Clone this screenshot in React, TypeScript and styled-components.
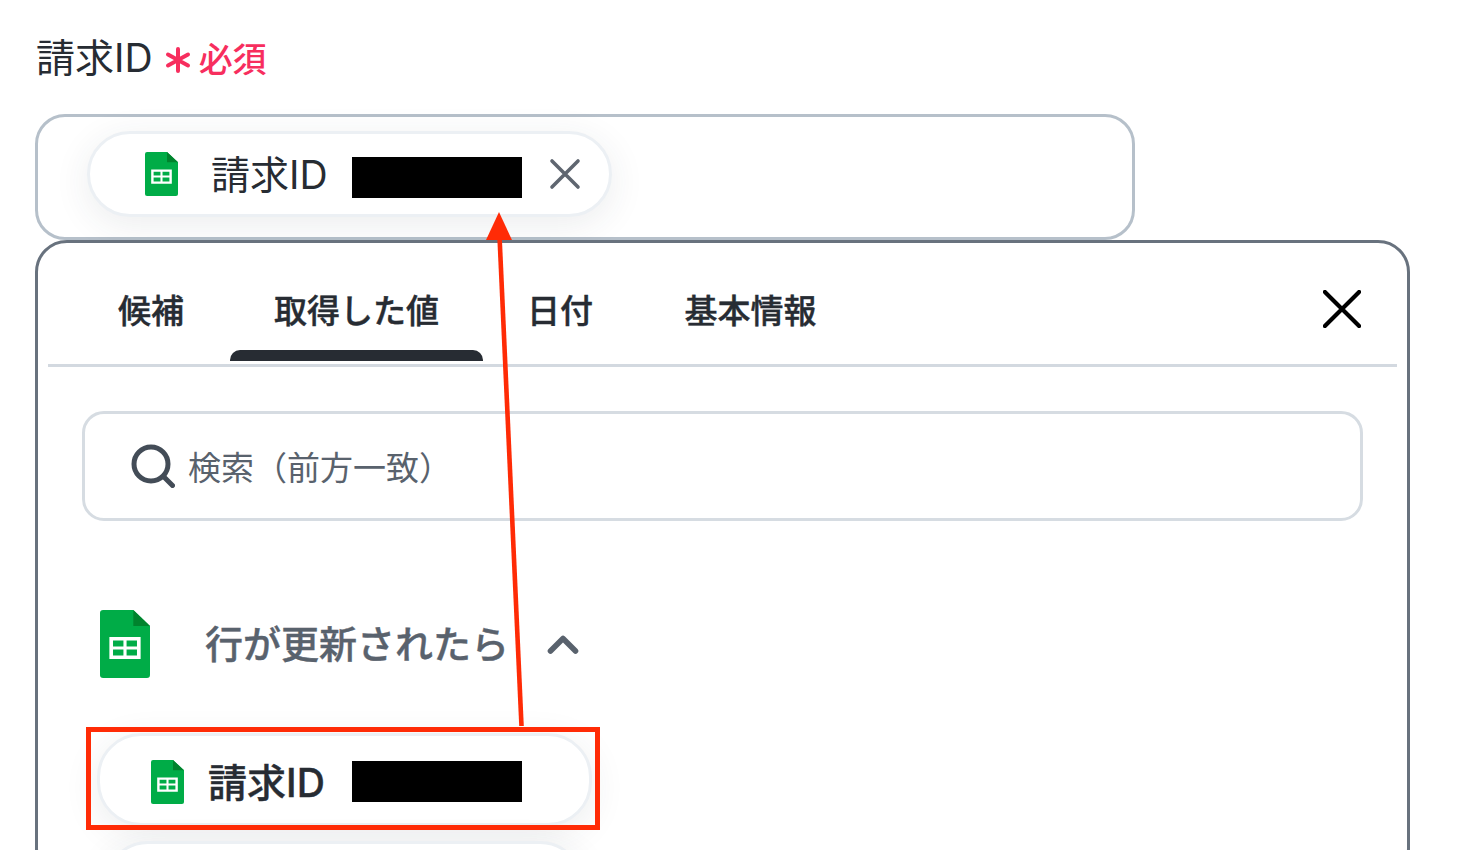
import React from "react";
import styled, { createGlobalStyle } from "styled-components";

const Global = createGlobalStyle`
  html, body { margin: 0; padding: 0; background: #fff; overflow: hidden; }
  body { font-family: Inter, "Noto Sans CJK JP", "Noto Sans", sans-serif; color: #272c33; }
`;
const Page = styled.div`
  position: relative;
  width: 1462px;
  height: 850px;
  overflow: hidden;
  padding: 36px 0 0 35px;
  box-sizing: border-box;
`;
const LabelRow = styled.div`
  display: flex;
  align-items: center;
  height: 44px;
  padding-left: 1px;
`;
const LabelText = styled.span`
  font-size: 39px;
  line-height: 44px;
  color: #272c33;
`;
const Required = styled.span`
  margin: 4px 0 0 12px;
  font-size: 34px;
  font-weight: 500;
  line-height: 44px;
  color: #f72e5e;
  display: flex;
  align-items: center;
  gap: 8px;
`;
const FieldBox = styled.div`
  margin-top: 34px;
  width: 1100px;
  height: 126px;
  box-sizing: border-box;
  border: 3px solid #b6c0ca;
  border-radius: 30px;
  padding: 14px 0 0 49px;
`;
const Chip = styled.div<{ $w: number; $h: number; $pad: number; $low?: boolean }>`
  width: ${(p) => p.$w}px;
  height: ${(p) => p.$h}px;
  box-sizing: border-box;
  border: 3px solid #ecf0f4;
  border-radius: 44px;
  background: #fff;
  box-shadow: 0 8px 36px rgba(40, 50, 70, 0.09);
  display: flex;
  align-items: center;
  padding-left: ${(p) => p.$pad}px;
  padding-top: ${(p) => (p.$low ? 4 : 0)}px;
`;
const ChipText = styled.span<{ $bold?: boolean; $size: number; $left: number }>`
  font-size: ${(p) => p.$size}px;
  font-weight: ${(p) => (p.$bold ? 500 : 400)};
  ${(p) => (p.$bold ? "-webkit-text-stroke: 0.4px #272c33;" : "")}
  margin-left: ${(p) => p.$left}px;
  padding-bottom: 4px;
  width: ${(p) => (p.$bold ? 144 : 141)}px;
  flex: none;
  color: #272c33;
  white-space: nowrap;
`;
const Redact = styled.div<{ $flat?: boolean }>`
  width: 170px;
  height: 41px;
  background: #000;
  flex: none;
  margin-top: ${(p) => (p.$flat ? 0 : 6)}px;
`;
const ChipClose = styled.svg`
  margin-left: 27px;
  flex: none;
`;
const Panel = styled.div`
  width: 1375px;
  height: 640px;
  box-sizing: border-box;
  border: 3px solid #68727e;
  border-radius: 32px;
  background: #fff;
  padding: 0 10px;
`;
const TabBar = styled.div`
  position: relative;
  display: flex;
  align-items: flex-start;
  height: 124px;
  box-sizing: border-box;
  padding-left: 24px;
  border-bottom: 3px solid #d3d9e0;
`;
const Tab = styled.div<{ $w: number; $active?: boolean }>`
  position: relative;
  width: ${(p) => p.$w}px;
  height: 119px;
  flex: none;
  font-size: 33px;
  font-weight: 500;
  -webkit-text-stroke: 0.4px #272c33;
  line-height: 136px;
  text-align: center;
  color: #272c33;
  ${(p) =>
    p.$active &&
    `&::after { content: ""; position: absolute; left: 0; right: 0; top: 107px; height: 11px; background: #272c33; border-radius: 10px 10px 0 0; }`}
`;
const PanelClose = styled.svg`
  position: absolute;
  right: 36px;
  top: 47px;
`;
const SearchBox = styled.div`
  margin: 44px 0 0 34px;
  width: 1281px;
  height: 110px;
  box-sizing: border-box;
  border: 3px solid #d6dce2;
  border-radius: 22px;
  display: flex;
  align-items: center;
  padding-left: 46px;
  gap: 13px;
`;
const Placeholder = styled.span`
  font-size: 33px;
  color: #59626d;
`;
const GroupRow = styled.div`
  display: flex;
  align-items: center;
  margin: 87px 0 0 52px;
  height: 72px;
`;
const GroupTitle = styled.span`
  margin-left: 55px;
  padding-bottom: 6px;
  width: 337px;
  flex: none;
  font-size: 38px;
  font-weight: 500;
  -webkit-text-stroke: 0.4px #59626d;
  color: #59626d;
  white-space: nowrap;
`;
const Items = styled.div`
  margin: 53px 0 0 49px;
  display: flex;
  flex-direction: column;
  gap: 15px;
`;
const NextChip = styled.div`
  margin-left: 7px;
  width: 480px;
  height: 90px;
  box-sizing: border-box;
  border: 3px solid #ecf0f4;
  border-radius: 44px;
  background: #fff;
  box-shadow: 0 8px 36px rgba(40, 50, 70, 0.09);
`;
const RedBox = styled.div`
  position: absolute;
  left: 86px;
  top: 727px;
  width: 514px;
  height: 103px;
  box-sizing: border-box;
  border: 5px solid #ff2b06;
`;
const Arrow = styled.svg`
  position: absolute;
  left: 0;
  top: 0;
  pointer-events: none;
`;

const SheetIcon = ({ w, h }: { w: number; h: number }) => (
  <svg width={w} height={h} viewBox="0 0 48 68" preserveAspectRatio="none" style={{ flex: "none", display: "block" }}>
    <path d="M3 0H32L48 16V65a3 3 0 0 1-3 3H3a3 3 0 0 1-3-3V3a3 3 0 0 1 3-3Z" fill="#00ac47" />
    <path d="M32 0L48 16H32Z" fill="#00832d" />
    <path fillRule="evenodd" fill="#fff" d="M9 27H39V49H9ZM12.5 30.5V36.5H22.5V30.5ZM25.5 30.5V36.5H35.5V30.5ZM12.5 39.5V45.5H22.5V39.5ZM25.5 39.5V45.5H35.5V39.5Z" />
  </svg>
);

export default function App() {
  return (
    <>
      <Global />
      <Page>
        <LabelRow>
          <LabelText>請求ID</LabelText>
          <Required>
            <svg width="26" height="26" viewBox="0 0 26 26">
              <path d="M13 2V24M3 7.5L23 18.5M23 7.5L3 18.5" stroke="#f72e5e" strokeWidth="4" strokeLinecap="round" />
            </svg>
            <span>必須</span>
          </Required>
        </LabelRow>
        <FieldBox>
          <Chip $w={525} $h={86} $pad={55}>
            <SheetIcon w={33} h={44} />
            <ChipText $size={39} $left={33}>請求ID</ChipText>
            <Redact />
            <ChipClose width="32" height="32" viewBox="0 0 32 32">
              <path d="M3 3L29 29M29 3L3 29" stroke="#5f6670" strokeWidth="3.6" strokeLinecap="round" />
            </ChipClose>
          </Chip>
        </FieldBox>
        <Panel>
          <TabBar>
            <Tab $w={158}>候補</Tab>
            <Tab $w={253} $active>取得した値</Tab>
            <Tab $w={154}>日付</Tab>
            <Tab $w={227}>基本情報</Tab>
            <PanelClose width="38" height="38" viewBox="0 0 40 40">
              <path d="M2 2L38 38M38 2L2 38" stroke="#000" strokeWidth="4.4" strokeLinecap="round" />
            </PanelClose>
          </TabBar>
          <SearchBox>
            <svg width="44" height="44" viewBox="0 0 44 44" style={{ flex: "none" }}>
              <circle cx="20" cy="20" r="17" fill="none" stroke="#434c57" strokeWidth="5" />
              <path d="M32.5 32.5L41.5 41.5" stroke="#434c57" strokeWidth="5" strokeLinecap="round" />
            </svg>
            <Placeholder>検索（前方一致）</Placeholder>
          </SearchBox>
          <GroupRow>
            <SheetIcon w={50} h={68} />
            <GroupTitle>行が更新されたら</GroupTitle>
            <svg width="32" height="22" viewBox="0 0 32 22" style={{ flex: "none", marginLeft: 5 }}>
              <path d="M3.5 18L16 5.5L28.5 18" fill="none" stroke="#59626d" strokeWidth="5.6" strokeLinecap="round" strokeLinejoin="round" />
            </svg>
          </GroupRow>
          <Items>
            <Chip $w={495} $h={93} $pad={51} $low>
              <SheetIcon w={33} h={44} />
              <ChipText $bold $size={39} $left={24}>請求ID</ChipText>
              <Redact $flat />
            </Chip>
            <NextChip />
          </Items>
        </Panel>
        <RedBox />
        <Arrow width="1462" height="850" viewBox="0 0 1462 850">
          <path d="M521.5 726L499.5 236" stroke="#ff2b06" strokeWidth="4.6" fill="none" />
          <path d="M499 212L512 240H486Z" fill="#ff2b06" />
        </Arrow>
      </Page>
    </>
  );
}
